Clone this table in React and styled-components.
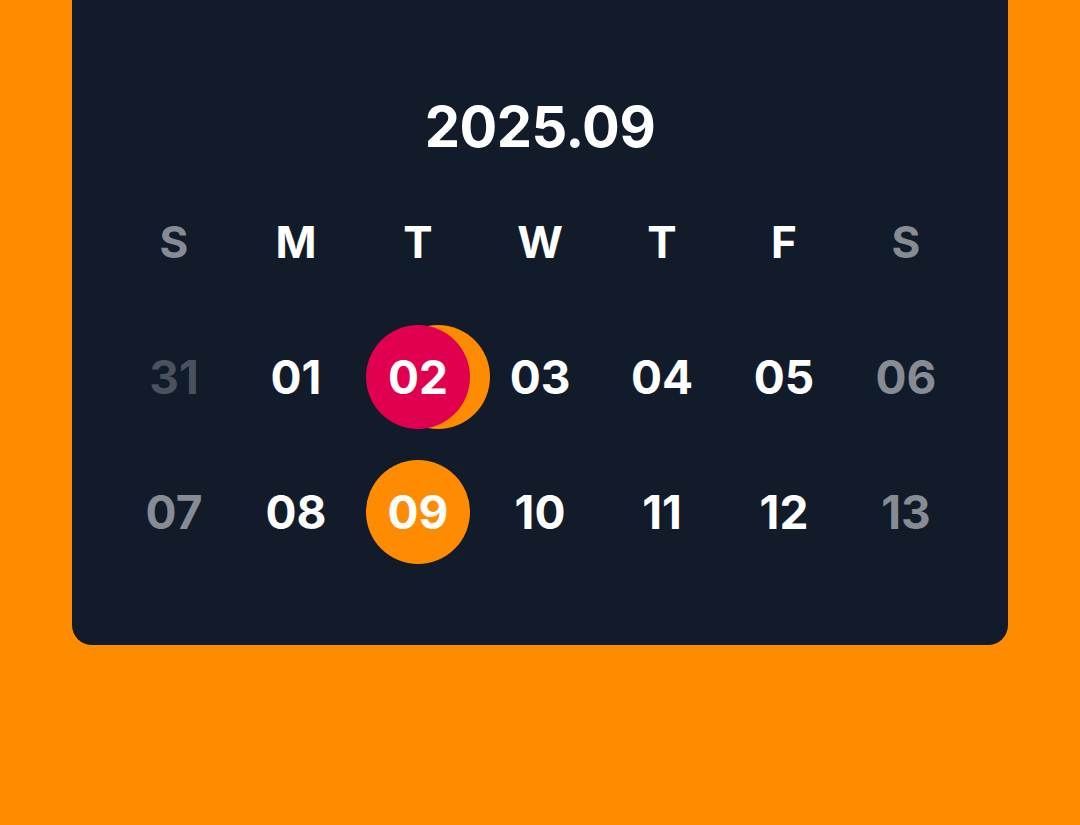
import React from 'react'
import styled, { createGlobalStyle } from 'styled-components'

const GlobalStyle = createGlobalStyle`
  html, body {
    margin: 0;
    padding: 0;
    background: #ff8c00;
    font-family: Inter, "Noto Sans", sans-serif;
  }
`

const Page = styled.div`
  width: 1080px;
  height: 825px;
  padding: 0 72px;
  box-sizing: border-box;
  overflow: hidden;
`

const Card = styled.div`
  background: #121b2a;
  border-radius: 0 0 20px 20px;
  height: 645px;
  box-sizing: border-box;
  padding: 99px 41px 0;
`

const Title = styled.h1`
  margin: 0 0 19.5px;
  height: 56px;
  line-height: 56px;
  font-size: 56px;
  font-weight: 700;
  color: #fff;
  text-align: center;
  letter-spacing: -0.5px;
`

const Grid = styled.div`
  display: grid;
  grid-template-columns: repeat(7, 122px);
  grid-auto-rows: 135px;
`

const Weekday = styled.div`
  display: flex;
  align-items: center;
  justify-content: center;
  font-size: 44px;
  font-weight: 700;
  color: ${p => (p.$weekend ? '#878b94' : '#fff')};
`

const Cell = styled.div`
  display: flex;
  align-items: center;
  justify-content: center;
`

const colors = {
  normal: '#fff',
  weekend: '#878b94',
  outside: '#4a525f',
}

const Day = styled.div`
  width: 104px;
  height: 104px;
  border-radius: 50%;
  display: flex;
  align-items: center;
  justify-content: center;
  font-size: 46px;
  font-weight: 700;
  color: ${p => colors[p.$tone] || '#fff'};
  background: ${p => p.$bg || 'transparent'};
  box-shadow: ${p => (p.$ring ? `20px 0 0 ${p.$ring}` : 'none')};
`

const weekdays = ['S', 'M', 'T', 'W', 'T', 'F', 'S']

const days = [
  { n: '31', tone: 'outside' },
  { n: '01' },
  { n: '02', bg: '#e0004f', ring: '#ff8c00' },
  { n: '03' },
  { n: '04' },
  { n: '05' },
  { n: '06', tone: 'weekend' },
  { n: '07', tone: 'weekend' },
  { n: '08' },
  { n: '09', bg: '#ff8c00' },
  { n: '10' },
  { n: '11' },
  { n: '12' },
  { n: '13', tone: 'weekend' },
]

export default function App() {
  return (
    <>
      <GlobalStyle />
      <Page>
        <Card>
          <Title>2025.09</Title>
          <Grid>
            {weekdays.map((d, i) => (
              <Weekday key={i} $weekend={i === 0 || i === 6}>{d}</Weekday>
            ))}
            {days.map(d => (
              <Cell key={d.n}>
                <Day $tone={d.tone} $bg={d.bg} $ring={d.ring}>{d.n}</Day>
              </Cell>
            ))}
          </Grid>
        </Card>
      </Page>
    </>
  )
}
